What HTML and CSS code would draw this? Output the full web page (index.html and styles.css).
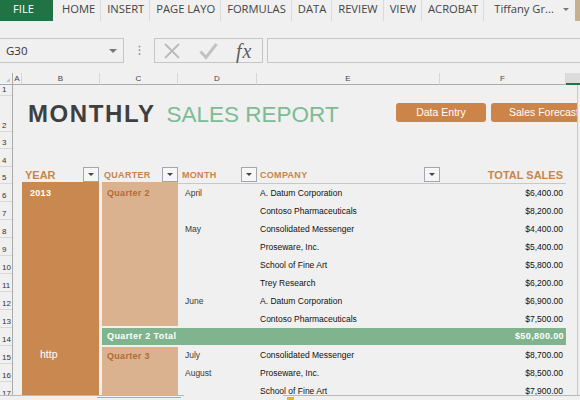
FILE: index.html
```html
<!DOCTYPE html>
<html lang="en">
<head>
    <meta charset="UTF-8">
    <meta name="viewport" content="width=device-width, initial-scale=1.0">
    <title>Monthly Sales Report</title>
    <link rel="stylesheet" href="styles.css">
</head>
<body>

    <div class="tabs">
        <div class="tab file">FILE</div>
        <div class="tab">HOME</div>
        <div class="tab">INSERT</div>
        <div class="tab">PAGE LAYO</div>
        <div class="tab">FORMULAS</div>
        <div class="tab">DATA</div>
        <div class="tab">REVIEW</div>
        <div class="tab">VIEW</div>
        <div class="tab">ACROBAT</div>
        <div class="user">Tiffany Gr...<span class="caret"></span><span class="avatar"></span></div>
    </div>

    <div class="formula-bar">
        <div class="namebox"><span>G30</span><span class="caret big"></span></div>
        <div class="dots">
            <svg width="3" height="11" viewBox="0 0 3 11"><circle cx="1.5" cy="1.5" r="1" fill="#9a9a9a"/><circle cx="1.5" cy="5.3" r="1" fill="#9a9a9a"/><circle cx="1.5" cy="9.1" r="1" fill="#9a9a9a"/></svg>
        </div>
        <div class="fxbox">
            <svg width="18" height="16" viewBox="0 0 18 16"><path d="M2 1 L16 15 M16 1 L2 15" stroke="#b9b9b9" stroke-width="1.8" fill="none"/></svg>
            <svg width="19" height="18" viewBox="0 0 19 18"><path d="M1.5 9.5 L7 15.5 L17.5 2" stroke="#c2c2c2" stroke-width="3" fill="none"/></svg>
            <span class="fx">fx</span>
        </div>
        <div class="input"></div>
    </div>

    <div class="colheads">
        <div class="ch corner"><span class="tri"></span></div>
        <div class="ch a">A</div>
        <div class="ch b">B</div>
        <div class="ch b">C</div>
        <div class="ch d">D</div>
        <div class="ch e">E</div>
        <div class="ch f">F</div>
        <div class="ch g"></div>
    </div>

    <div class="sheet">
        <div class="rownums">
            <div>1</div><div>2</div><div>3</div><div>4</div><div>5</div><div>6</div>
            <div>7</div><div>8</div><div>9</div><div>10</div><div>11</div><div>12</div>
            <div>13</div><div>14</div><div>15</div><div>16</div><div>17</div>
        </div>

        <div class="cells">
            <div class="row1"></div>

            <div class="title-row">
                <h1 class="title">MONTHLY <span class="green">SALES REPORT</span></h1>
                <div class="btns">
                    <div class="btn entry">Data Entry</div>
                    <div class="btn">Sales Forecast</div>
                </div>
            </div>

            <div class="blank-rows"></div>

            <div class="head-row">
                <div class="hd year-h">YEAR<span class="filter"></span></div>
                <div class="hd quarter-h">QUARTER<span class="filter"></span></div>
                <div class="hd month-h">MONTH<span class="filter"></span></div>
                <div class="hd company-h">COMPANY<span class="filter"></span></div>
                <div class="hd total-h">TOTAL SALES</div>
            </div>

            <div class="report">
                <div class="year-block">
                    <div class="yr">2013</div>
                    <div class="http">http</div>
                </div>
                <div class="qblock q2">Quarter 2</div>
                <div class="total-row"><span>Quarter 2 Total</span><span>$50,800.00</span></div>
                <div class="qblock q3">Quarter 3</div>

                <div class="month">April</div><div class="company">A. Datum Corporation</div><div class="amount">$6,400.00</div>
                <div class="month"></div><div class="company">Contoso Pharmaceuticals</div><div class="amount">$8,200.00</div>
                <div class="month">May</div><div class="company">Consolidated Messenger</div><div class="amount">$4,400.00</div>
                <div class="month"></div><div class="company">Proseware, Inc.</div><div class="amount">$5,400.00</div>
                <div class="month"></div><div class="company">School of Fine Art</div><div class="amount">$5,800.00</div>
                <div class="month"></div><div class="company">Trey Research</div><div class="amount">$6,200.00</div>
                <div class="month">June</div><div class="company">A. Datum Corporation</div><div class="amount">$6,900.00</div>
                <div class="month"></div><div class="company">Contoso Pharmaceuticals</div><div class="amount">$7,500.00</div>
                <div class="month">July</div><div class="company">Consolidated Messenger</div><div class="amount">$8,700.00</div>
                <div class="month">August</div><div class="company">Proseware, Inc.</div><div class="amount">$8,500.00</div>
                <div class="month"></div><div class="company">School of Fine Art</div><div class="amount">$7,900.00</div>
            </div>
        </div>
    </div>

    <div class="footer">
        <div class="sheet-tabs"><div class="active-sheet"></div></div>
        <div class="hscroll"><span class="mark"></span></div>
    </div>

</body>
</html>
```

FILE: styles.css
```css
body {
    margin: 0;
    width: 580px;
    height: 400px;
    overflow: hidden;
    background: #f0f0f0;
    font-family: "Liberation Sans", Arial, sans-serif;
}

/* ribbon tabs */
.tabs {
    display: flex;
    height: 21px;
    font-family: "Open Sans", sans-serif;
    font-size: 11.2px;
    line-height: 18px;
    color: #444;
    white-space: nowrap;
}
.tab {
    padding: 0 5px 0 6px;
    border-right: 1px solid #dadada;
}
.tab.file {
    width: 53px;
    box-sizing: border-box;
    padding-left: 13px;
    margin-right: 3px;
    border: none;
    background: #217346;
    color: #fff;
}
.user {
    flex: 1;
    display: flex;
    align-items: flex-start;
    padding-left: 10px;
}
.caret {
    width: 0;
    height: 0;
    margin: 8px 0 0 9px;
    border-left: 3px solid transparent;
    border-right: 3px solid transparent;
    border-top: 3px solid #777;
}
.caret.big {
    margin: 0;
    border-left-width: 4px;
    border-right-width: 4px;
    border-top-width: 4px;
}
.avatar {
    margin-left: auto;
    width: 5px;
    height: 21px;
    background: #c7b08f;
}

/* formula bar */
.formula-bar {
    display: flex;
    height: 25px;
    margin-top: 17px;
}
.namebox {
    width: 124px;
    box-sizing: border-box;
    border: 1px solid #c6c6c6;
    border-left: none;
    display: flex;
    align-items: center;
    justify-content: space-between;
    padding: 0 6px;
    font-family: "Open Sans", sans-serif;
    font-size: 11.5px;
    color: #333;
}
.dots {
    width: 30px;
    display: flex;
    align-items: center;
    justify-content: center;
}
.fxbox {
    width: 109px;
    box-sizing: border-box;
    border: 1px solid #c6c6c6;
    display: flex;
    align-items: center;
    gap: 18px;
    padding-left: 8px;
}
.fx {
    font-family: "Liberation Serif", serif;
    font-style: italic;
    font-size: 20px;
    letter-spacing: 1px;
    color: #5e5e5e;
    line-height: 20px;
}
.input {
    flex: 1;
    margin-left: 4px;
    border: 1px solid #c6c6c6;
    border-right: none;
}

/* column headers */
.colheads {
    display: flex;
    margin-top: 10px;
    font-size: 8px;
    line-height: 11px;
    color: #444;
}
.ch {
    height: 12px;
    box-sizing: border-box;
    border-right: 1px solid #d6d6d6;
    border-bottom: 1px solid #ababab;
    text-align: center;
}
.ch.corner {
    width: 13px;
    border-right-color: #ababab;
    display: flex;
    align-items: flex-end;
    justify-content: flex-end;
    padding: 0 2px 2px 0;
}
.tri {
    width: 0;
    height: 0;
    border-left: 4px solid transparent;
    border-bottom: 4px solid #c4c4c4;
}
.ch.a { width: 9px; }
.ch.b { width: 78px; }
.ch.d { width: 79px; }
.ch.e { width: 183px; }
.ch.f { width: 126px; }
.ch.g {
    flex: 1;
    border-right: none;
    background: #dcdcdc;
    border-bottom: 2px solid #217346;
}

/* worksheet */
.sheet {
    display: flex;
    width: 577px;
    height: 310px;
    overflow: hidden;
    border-right: 1px solid #c8c8c8;
}
.rownums {
    width: 13px;
    flex-shrink: 0;
    box-sizing: border-box;
    border-right: 1px solid #ababab;
    display: grid;
    grid-template-rows: 11px 36px 17px 18px 17px repeat(12, 18px);
    font-size: 8px;
    color: #333;
}
.rownums div {
    box-sizing: border-box;
    border-bottom: 1px solid #d8d8d8;
    display: flex;
    align-items: flex-end;
    padding: 0 0 1px 2px;
    line-height: 9px;
}
.cells {
    flex: 1;
    min-width: 0;
    padding-left: 9px;
    display: flex;
    flex-direction: column;
}
.cells > div {
    flex-shrink: 0;
}
.row1 { height: 11px; }
.blank-rows { height: 35px; }

.title-row {
    height: 36px;
    display: flex;
    align-items: flex-start;
    white-space: nowrap;
}
.title {
    flex: 0 0 368px;
    margin: 6px 0 0 6px;
    font-size: 24px;
    line-height: 24px;
    font-weight: bold;
    letter-spacing: 1.6px;
    color: #3f3f3f;
}
.title .green {
    margin-left: 3px;
    font-size: 22.5px;
    font-weight: normal;
    letter-spacing: 0;
    color: #7dbb94;
}
.btns {
    display: flex;
    gap: 5px;
    margin-top: 7px;
}
.btn {
    flex-shrink: 0;
    height: 19px;
    line-height: 19px;
    padding: 0 18px;
    border-radius: 3px;
    background: #cc8449;
    color: #fff;
    font-size: 10.5px;
}
.btn.entry {
    width: 90px;
    box-sizing: border-box;
    padding: 0;
    text-align: center;
}

.head-row {
    display: flex;
    height: 17px;
    white-space: nowrap;
}
.hd {
    box-sizing: border-box;
    display: flex;
    align-items: center;
    justify-content: space-between;
    border-bottom: 1px solid #c8c8c8;
    color: #c98549;
    font-weight: bold;
    font-size: 9px;
    letter-spacing: 0.3px;
}
.year-h {
    width: 77px;
    margin-right: 1px;
    padding-left: 3px;
    border-bottom: 2px solid #c9884f;
    font-size: 11px;
    letter-spacing: 0;
}
.quarter-h {
    width: 76px;
    margin-left: 2px;
    padding-left: 2px;
    border-bottom: 2px solid #dbb290;
}
.month-h { width: 79px; padding-left: 4px; }
.company-h { width: 183px; padding-left: 3px; }
.total-h {
    width: 126px;
    justify-content: flex-end;
    padding-right: 3px;
    font-size: 11px;
    letter-spacing: 0;
}
.filter {
    align-self: flex-start;
    width: 16px;
    height: 15px;
    box-sizing: border-box;
    border: 1px solid #a2a6ad;
    background: #f6f6f6;
    display: flex;
    align-items: center;
    justify-content: center;
}
.filter::after {
    content: "";
    border-left: 3px solid transparent;
    border-right: 3px solid transparent;
    border-top: 3px solid #444;
}

.report {
    display: grid;
    grid-template-columns: 78px 78px 79px 183px 126px;
    grid-template-rows: repeat(12, 18px);
    font-size: 8.5px;
    line-height: 18px;
    white-space: nowrap;
}
.year-block {
    grid-column: 1;
    grid-row: 1 / -1;
    margin-right: 1px;
    background: #c9884f;
    color: #fff;
    display: flex;
    flex-direction: column;
}
.yr {
    padding: 3px 0 0 8px;
    font-size: 9px;
    line-height: 12px;
    font-weight: bold;
    letter-spacing: 0.3px;
}
.http {
    margin-top: 149px;
    padding-left: 18px;
    font-size: 10.5px;
    line-height: 12px;
}
.qblock {
    grid-column: 2;
    margin-left: 2px;
    padding-left: 5px;
    background: #dbb290;
    color: #b36a33;
    font-weight: bold;
    font-size: 9px;
    letter-spacing: 0.3px;
}
.q2 { grid-row: 1 / 9; margin-bottom: 2px; }
.q3 { grid-row: 10 / -1; margin-top: 1px; }
.total-row {
    grid-column: 2 / 6;
    grid-row: 9;
    margin: 0 0 1px 2px;
    padding: 0 2px 0 5px;
    display: flex;
    justify-content: space-between;
    background: #80b48e;
    color: #fff;
    font-weight: bold;
    font-size: 9px;
    line-height: 17px;
    letter-spacing: 0.4px;
}
.month {
    grid-column: 3;
    padding-left: 7px;
    color: #3a3a3a;
}
.company {
    grid-column: 4;
    padding-left: 3px;
    color: #111;
}
.amount {
    grid-column: 5;
    padding-right: 3px;
    text-align: right;
    color: #111;
}

/* sheet tabs / scroll strip */
.footer {
    display: flex;
    height: 5px;
}
.sheet-tabs {
    width: 184px;
    border-top: 1px solid #b9b9b9;
}
.active-sheet {
    width: 84px;
    height: 1px;
    margin: 1px 0 0 97px;
    background: #8cc09a;
}
.hscroll {
    flex: 1;
    margin-left: 99px;
    border-top: 1px solid #b9b9b9;
}
.mark {
    display: block;
    width: 7px;
    height: 3px;
    margin: 1px 0 0 4px;
    background: #e0b040;
}
```
